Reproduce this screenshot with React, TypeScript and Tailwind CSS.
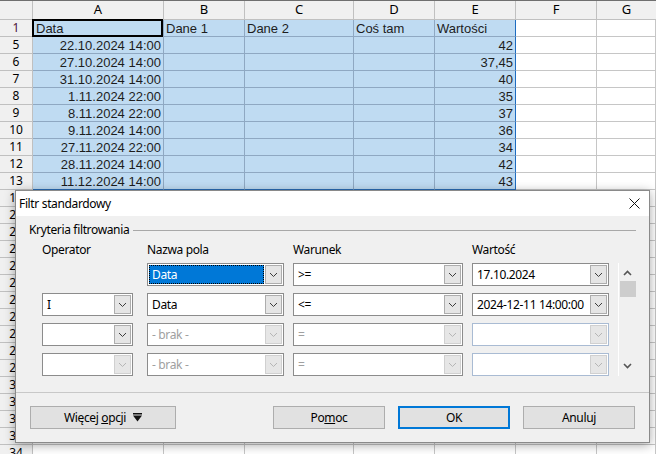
import React from "react";

const UI = { fontFamily: '"Noto Sans", "Open Sans", sans-serif' };
const SHEET = { fontFamily: '"Liberation Sans", Arial, sans-serif' };

type Row = { n: number; a?: string; b?: string; c?: string; d?: string; e?: string; sel: boolean; last?: boolean; head?: boolean };

const rows: Row[] = [
  { n: 1, a: "Data", b: "Dane 1", c: "Dane 2", d: "Coś tam", e: "Wartości", sel: true, head: true },
  { n: 5, a: "22.10.2024 14:00", e: "42", sel: true },
  { n: 6, a: "27.10.2024 14:00", e: "37,45", sel: true },
  { n: 7, a: "31.10.2024 14:00", e: "40", sel: true },
  { n: 8, a: "1.11.2024 22:00", e: "35", sel: true },
  { n: 9, a: "8.11.2024 22:00", e: "37", sel: true },
  { n: 10, a: "9.11.2024 14:00", e: "36", sel: true },
  { n: 11, a: "27.11.2024 22:00", e: "34", sel: true },
  { n: 12, a: "28.11.2024 14:00", e: "42", sel: true },
  { n: 13, a: "11.12.2024 14:00", e: "43", sel: true, last: true },
  ...Array.from({ length: 16 }, (_, i) => ({ n: 19 + i, sel: false })),
];

function Chevron({ color }: { color: string }) {
  return (
    <svg width="9" height="6" viewBox="0 0 9 6">
      <path d="M1 1 L4.5 4.5 L8 1" fill="none" stroke={color} strokeWidth="1" />
    </svg>
  );
}

function SheetRow({ r }: { r: Row }) {
  const selCell = r.last
    ? "bg-[#bfdbf2] border-r border-b border-r-[#8fa8c2] border-b-[#2a6cb5]"
    : "bg-[#bfdbf2] border-r border-b border-[#8fa8c2]";
  const plain = "bg-white border-r border-b border-[#c6c6c6]";
  const cls = r.sel ? selCell : plain;
  const eCls = r.sel
    ? r.last
      ? "bg-[#bfdbf2] border-r border-b border-r-[#1e6cc0] border-b-[#2a6cb5]"
      : "bg-[#bfdbf2] border-r border-b border-r-[#1e6cc0] border-b-[#8fa8c2]"
    : plain;
  return (
    <div className="flex h-[17px] text-[13px] leading-none text-[#1d1d1d]" style={SHEET}>
      <div
        className={`w-[33px] shrink-0 border-r border-b border-[#c0c0c0] bg-[#f0f0f0] flex items-center justify-center text-[12px] ${r.head ? "text-[#4b1535]" : "text-black"}`}
        style={UI}
      >
        {r.n}
      </div>
      <div className={`relative w-[131px] shrink-0 flex items-center ${r.head ? "justify-start pl-[3px]" : "justify-end pr-[2px]"} ${cls}`}>
        {r.head && <div className="absolute left-[-1px] top-[-1px] w-[131px] h-[18px] border-2 border-black" />}
        <span className="relative">{r.a}</span>
      </div>
      <div className={`w-[81px] shrink-0 flex items-center pl-[2px] ${cls}`}>{r.b}</div>
      <div className={`w-[109px] shrink-0 flex items-center pl-[2px] ${cls}`}>{r.c}</div>
      <div className={`w-[81px] shrink-0 flex items-center pl-[2px] ${cls}`}>{r.d}</div>
      <div className={`w-[81px] shrink-0 flex items-center ${r.head ? "justify-start pl-[2px]" : "justify-end pr-[2px]"} ${eCls}`}>{r.e}</div>
      <div className={`w-[81px] shrink-0 ${plain}`} />
      <div className={`flex-1 ${plain}`} />
    </div>
  );
}

type ComboState = "normal" | "selected" | "disabled" | "disabledBlue";

function Combo({ w, text, state = "normal" }: { w: string; text?: string; state?: ComboState }) {
  const border = state === "disabledBlue" ? "border-[#a9bbd3]" : "border-[#8c8c8c]";
  const dis = state === "disabled" || state === "disabledBlue";
  return (
    <div className={`${w} h-[23px] border ${border} bg-white flex items-stretch p-[1px]`}>
      <div className="flex-1 flex items-center min-w-0 whitespace-nowrap overflow-hidden">
        {state === "selected" ? (
          <div className="h-full w-full bg-[#0078d7] border border-dotted border-black flex items-center pl-[2px] text-white">
            {text}
          </div>
        ) : (
          <span className={`pl-[3px] ${dis ? "text-[#a0a0a0]" : "text-black"}`}>{text}</span>
        )}
      </div>
      <div
        className={`w-[17px] shrink-0 ml-[1px] flex items-center justify-center border ${dis ? "bg-[#e6e6e6] border-[#d0d0d0]" : "bg-[#e5e5e5] border-[#adadad]"}`}
      >
        <Chevron color={dis ? "#b5b5b5" : "#3c3c3c"} />
      </div>
    </div>
  );
}

function Button({ children, w, primary }: { children: React.ReactNode; w: string; primary?: boolean }) {
  return (
    <div
      className={`${w} h-[23px] flex items-center justify-center bg-[#e1e1e1] ${primary ? "border-2 border-[#0078d7]" : "border border-[#adadad]"}`}
    >
      {children}
    </div>
  );
}

export default function App() {
  return (
    <div className="relative w-[656px] h-[454px] overflow-hidden bg-white">
      {/* spreadsheet */}
      <div className="flex flex-col">
        <div className="flex h-[20px] border-t border-[#6f6f6f] text-[13px] text-black" style={UI}>
          <div className="w-[33px] shrink-0 border-r border-b border-[#c0c0c0] bg-[#f0f0f0]" />
          {[
            ["A", "w-[131px]"],
            ["B", "w-[81px]"],
            ["C", "w-[109px]"],
            ["D", "w-[81px]"],
            ["E", "w-[81px]"],
            ["F", "w-[81px]"],
          ].map(([l, w]) => (
            <div key={l} className={`${w} shrink-0 border-r border-b border-[#c0c0c0] bg-[#f0f0f0] flex items-center justify-center`}>
              {l}
            </div>
          ))}
          <div className="flex-1 border-b border-[#c0c0c0] bg-[#f0f0f0] flex items-center justify-center">G</div>
        </div>
        {rows.map((r) => (
          <SheetRow key={r.n} r={r} />
        ))}
      </div>

      {/* dialog */}
      <div
        className="absolute left-[15px] top-[190px] w-[635px] h-[253px] border border-[#8a8a8a] bg-[#f0f0f0] flex flex-col shadow-[0_2px_10px_rgba(0,0,0,0.35)] text-[12px] tracking-[-0.35px] text-black"
        style={UI}
      >
        <div className="h-[25px] bg-white flex items-center justify-between pl-[3px] pr-[9px]">
          <span>Filtr standardowy</span>
          <svg width="11" height="11" viewBox="0 0 11 11">
            <path d="M0.5 0.5 L10.5 10.5 M10.5 0.5 L0.5 10.5" stroke="#111" strokeWidth="1" />
          </svg>
        </div>
        <div className="flex-1 flex flex-col">
          <div className="mt-[6px] h-[16px] flex items-center pl-[13px] pr-[13px]">
            <span>Kryteria filtrowania</span>
            <div className="flex-1 ml-[4px] h-px bg-[#a8a8a8]" />
          </div>
          <div className="mt-[3px] h-[17px] pl-[26px] grid grid-cols-[96px_137px_170px_137px] gap-x-[9px] items-center">
            <span>Operator</span>
            <span>Nazwa pola</span>
            <span>Warunek</span>
            <span>Wartość</span>
          </div>
          <div className="mt-[5px] pl-[26px] flex">
            <div className="grid grid-cols-[96px_137px_170px_137px] gap-x-[9px] gap-y-[7px]">
              <div />
              <Combo w="w-[137px]" text="Data" state="selected" />
              <Combo w="w-[170px]" text=">=" />
              <Combo w="w-[137px]" text="17.10.2024" />

              <Combo w="w-[91px]" text="I" />
              <Combo w="w-[137px]" text="Data" />
              <Combo w="w-[170px]" text="<=" />
              <Combo w="w-[137px]" text="2024-12-11 14:00:00" />

              <Combo w="w-[91px]" />
              <Combo w="w-[137px]" text="- brak -" state="disabled" />
              <Combo w="w-[170px]" text="=" state="disabled" />
              <Combo w="w-[137px]" state="disabledBlue" />

              <Combo w="w-[91px]" state="disabled" />
              <Combo w="w-[137px]" text="- brak -" state="disabled" />
              <Combo w="w-[170px]" text="=" state="disabled" />
              <Combo w="w-[137px]" state="disabledBlue" />
            </div>
            <div className="ml-[9px] w-[18px] h-[113px] border-l border-white flex flex-col items-center">
              <div className="mt-[6px] h-[8px] flex items-center">
                <svg width="9" height="6" viewBox="0 0 9 6">
                  <path d="M1 5 L4.5 1.5 L8 5" fill="none" stroke="#555" strokeWidth="1.6" />
                </svg>
              </div>
              <div className="mt-[4px] w-[16px] h-[16px] bg-[#cdcdcd]" />
              <div className="mt-auto mb-[6px] h-[8px] flex items-center">
                <svg width="9" height="6" viewBox="0 0 9 6">
                  <path d="M1 1 L4.5 4.5 L8 1" fill="none" stroke="#555" strokeWidth="1.6" />
                </svg>
              </div>
            </div>
          </div>
          <div className="mt-auto border-t border-[#c8c8c8] pt-[13px] pb-[13px] px-[14px] flex items-center">
            <Button w="w-[146px]">
              <span>
                Więcej <span className="underline">o</span>pcji
              </span>
              <svg className="ml-[7px]" width="9" height="9" viewBox="0 0 9 9">
                <rect x="0" y="0" width="9" height="1.5" fill="#111" />
                <polygon points="0,2.5 9,2.5 4.5,8.5" fill="#111" />
              </svg>
            </Button>
            <div className="flex-1" />
            <div className="flex gap-[13px]">
              <Button w="w-[112px]">
                <span>
                  Po<span className="underline">m</span>oc
                </span>
              </Button>
              <Button w="w-[112px]" primary>
                OK
              </Button>
              <Button w="w-[112px]">Anuluj</Button>
            </div>
          </div>
        </div>
      </div>
    </div>
  );
}
